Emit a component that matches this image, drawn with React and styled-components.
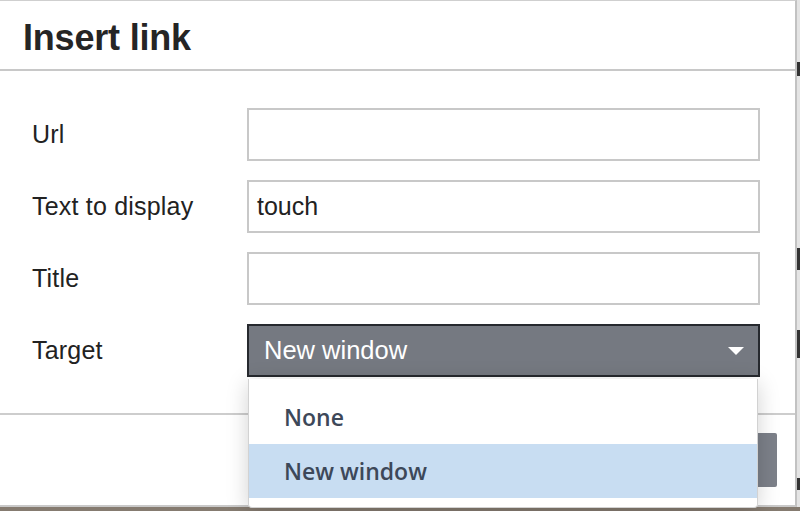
import styled, { createGlobalStyle } from "styled-components";

const GlobalStyle = createGlobalStyle`
  html, body {
    margin: 0;
    padding: 0;
    overflow: hidden;
    background: #dedede;
  }
  * {
    box-sizing: border-box;
  }
`;

const fields = [
  { label: "Url", value: "" },
  { label: "Text to display", value: "touch" },
  { label: "Title", value: "" },
];

const options = ["None", "New window"];

export default function App() {
  return (
    <Page>
      <GlobalStyle />
      <Top>
        <Dialog>
          <Header>
            <Title>Insert link</Title>
          </Header>
          <Body>
            {fields.map((f) => (
              <Row key={f.label}>
                <Label>{f.label}</Label>
                <Input>{f.value}</Input>
              </Row>
            ))}
            <Row>
              <Label>Target</Label>
              <SelectWrap>
                <Select>
                  New window
                  <Arrow />
                </Select>
                <Menu>
                  {options.map((o) => (
                    <Option key={o} active={o === "New window"}>
                      {o}
                    </Option>
                  ))}
                </Menu>
              </SelectWrap>
            </Row>
          </Body>
          <Footer>
            <OkButton />
          </Footer>
        </Dialog>
        <Side>
          <Mark top={62} h={14} />
          <Mark top={248} h={22} />
          <Mark top={330} h={28} />
          <Mark top={478} h={12} />
        </Side>
      </Top>
      <Bottom />
    </Page>
  );
}

const Page = styled.div`
  width: 800px;
  height: 511px;
  display: flex;
  flex-direction: column;
`;

const Top = styled.div`
  display: flex;
  height: 507px;
`;

const Dialog = styled.div`
  width: 797px;
  height: 507px;
  background: #fff;
  border-top: 1px solid #cfcfcf;
  border-right: 2px solid #c2c2c2;
  border-bottom: 2px solid #c9c9c9;
  display: flex;
  flex-direction: column;
  font-family: "Liberation Sans", Arial, sans-serif;
  color: #222;
`;

const Header = styled.div`
  height: 70px;
  border-bottom: 2px solid #c8c8c8;
  padding: 5px 0 0 23px;
  display: flex;
  align-items: center;
`;

const Title = styled.h1`
  margin: 0;
  font-size: 36px;
  font-weight: 700;
  color: #252525;
  letter-spacing: -0.2px;
`;

const Body = styled.div`
  padding: 37px 0 36px;
  display: flex;
  flex-direction: column;
  gap: 19px;
  border-bottom: 2px solid #cdcdcd;
`;

const Row = styled.div`
  display: flex;
  align-items: center;
  height: 53px;
`;

const Label = styled.div`
  width: 247px;
  padding-left: 32px;
  font-size: 25px;
  letter-spacing: 0.2px;
  color: #222;
`;

const Input = styled.div`
  width: 513px;
  height: 53px;
  border: 2px solid #c8c8c8;
  padding-left: 8px;
  display: flex;
  align-items: center;
  font-size: 25px;
  color: #222;
`;

const SelectWrap = styled.div`
  position: relative;
  width: 513px;
  height: 53px;
`;

const Select = styled.div`
  height: 53px;
  background: #757981;
  border: 2px solid #26292e;
  padding: 0 14px 0 15px;
  display: flex;
  align-items: center;
  justify-content: space-between;
  font-size: 25.5px;
  color: #fff;
`;

const Arrow = styled.span`
  width: 0;
  height: 0;
  border-left: 8px solid transparent;
  border-right: 8px solid transparent;
  border-top: 8px solid #fff;
`;

const Menu = styled.div`
  position: absolute;
  top: 55px;
  left: 1px;
  width: 510px;
  background: #fff;
  border: 1px solid #d2d2d2;
  border-top: none;
  border-radius: 0 0 4px 4px;
  padding: 11px 0 9px;
  box-shadow: 0 4px 22px rgba(0, 0, 0, 0.18);
  z-index: 2;
`;

const Option = styled.div`
  height: 54px;
  padding-left: 35px;
  display: flex;
  align-items: center;
  font-family: "Open Sans", "Noto Sans", sans-serif;
  font-size: 23px;
  font-weight: 600;
  color: #3d4859;
  background: ${(p) => (p.active ? "#c8ddf2" : "transparent")};
`;

const Footer = styled.div`
  flex: 1;
  display: flex;
  align-items: center;
  justify-content: flex-end;
  padding-right: 18px;
`;

const OkButton = styled.div`
  width: 90px;
  height: 54px;
  background: #7c8089;
  border-radius: 2px;
`;

const Side = styled.div`
  position: relative;
  flex: 1;
  background: #e4e4e4;
`;

const Mark = styled.span`
  position: absolute;
  left: 0;
  top: ${(p) => p.top}px;
  width: 3px;
  height: ${(p) => p.h}px;
  background: #333;
`;

const Bottom = styled.div`
  height: 4px;
  background: #857b70;
`;
